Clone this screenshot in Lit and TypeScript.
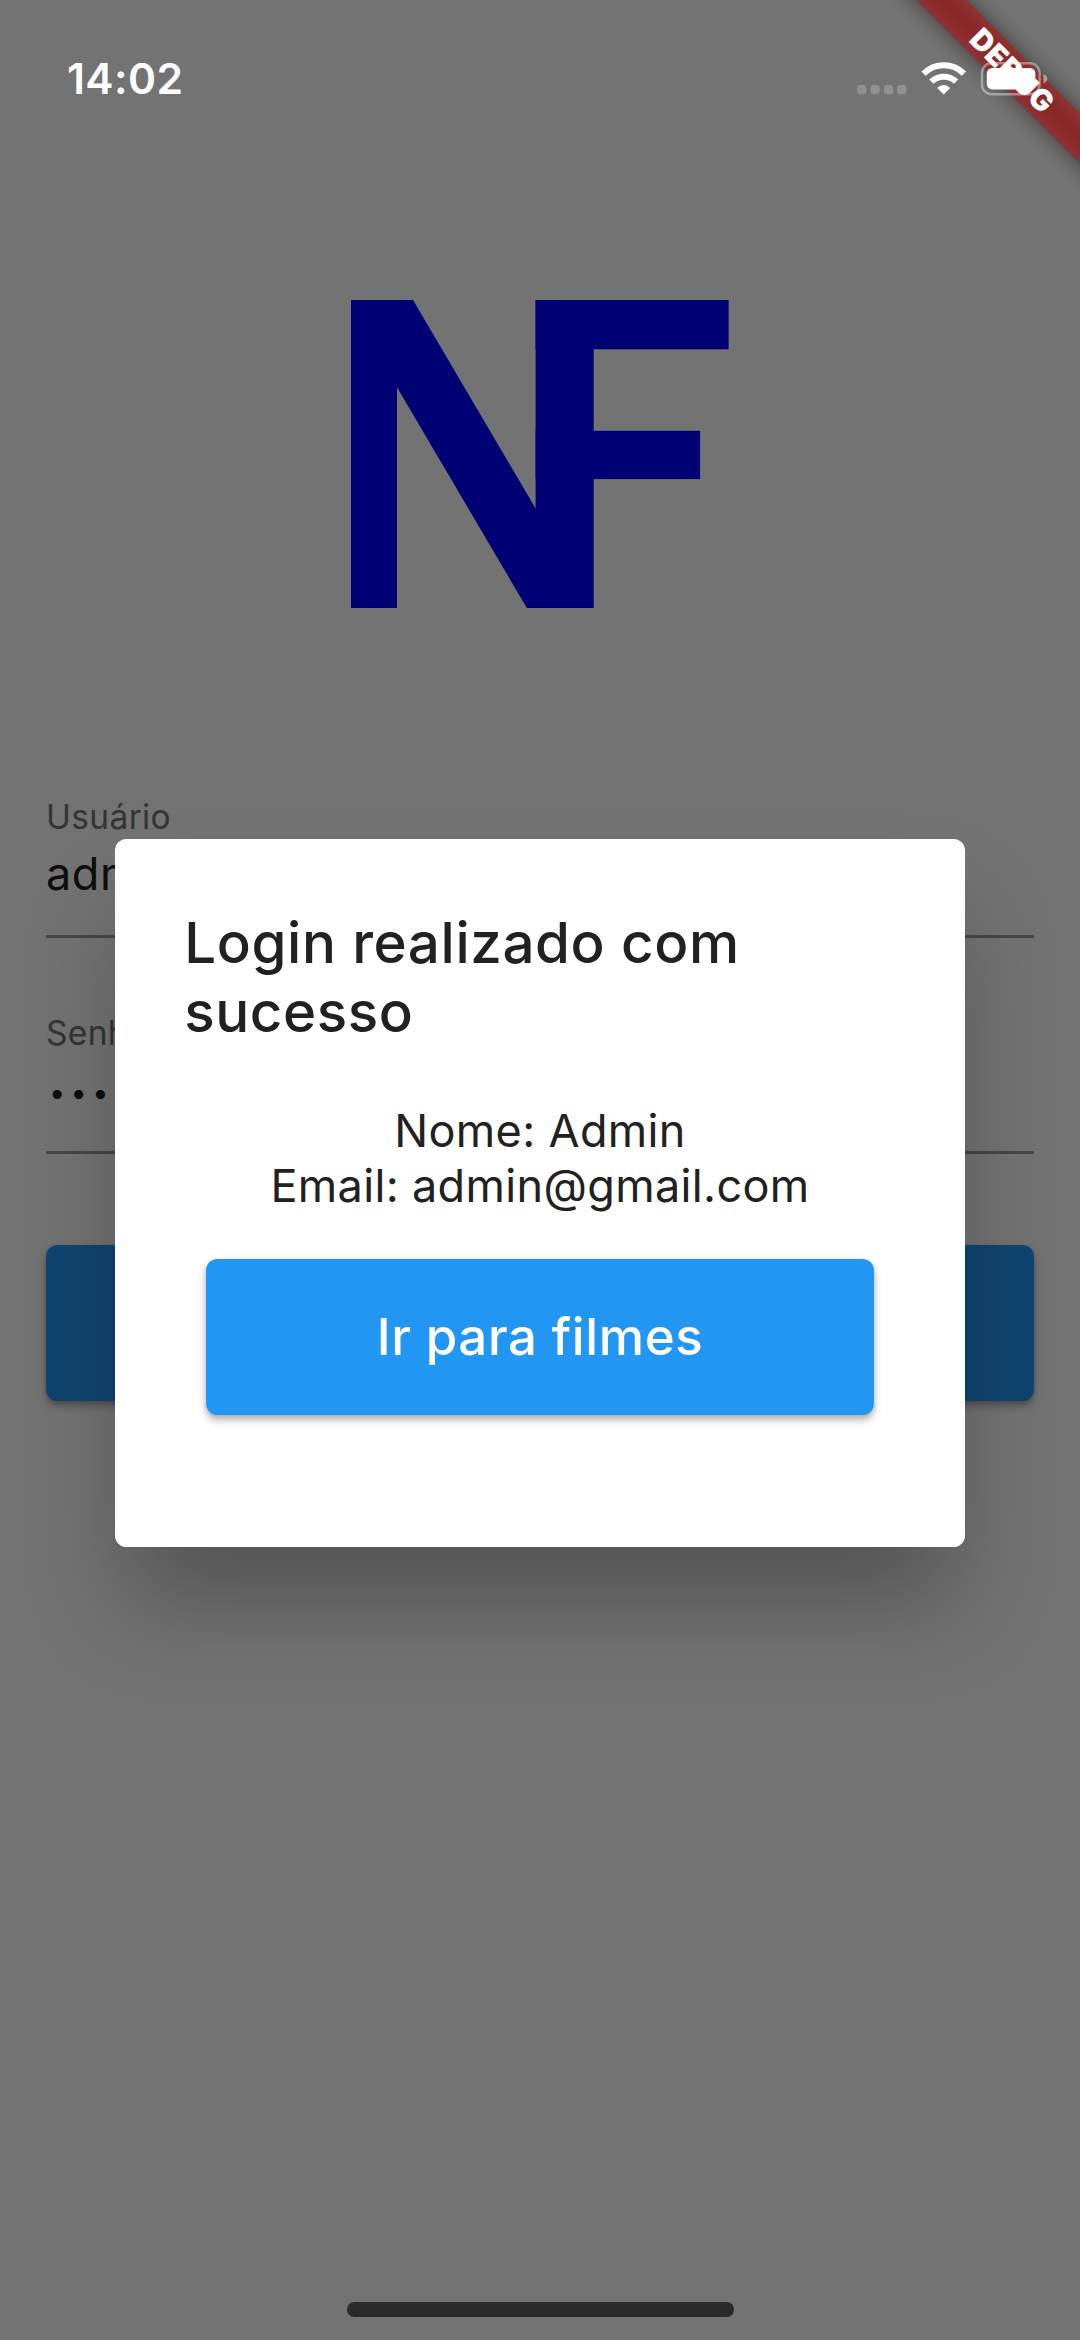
import { LitElement, html, css } from "lit";
import { customElement, property } from "lit/decorators.js";

@customElement("status-bar")
class StatusBar extends LitElement {
  static styles = css`
    :host {
      display: flex;
      justify-content: space-between;
      align-items: flex-start;
      box-sizing: border-box;
      padding: 53px 30px 0 67px;
      height: 160px;
      color: #fff;
    }
    .time {
      font-size: 42.5px;
      line-height: 52px;
      font-weight: 600;
      letter-spacing: 0.4px;
    }
    .icons {
      display: block;
      width: 193px;
      height: 36px;
      margin-top: 8px;
    }
  `;
  render() {
    return html`
      <span class="time">14:02</span>
      <svg class="icons" viewBox="857 61 193 36">
        <g fill="#fff" fill-opacity="0.22">
          <rect x="857" y="85" width="9.2" height="9.2" rx="3" />
          <rect x="870.5" y="85" width="9.2" height="9.2" rx="3" />
          <rect x="884" y="85" width="9.2" height="9.2" rx="3" />
          <rect x="897.2" y="85" width="9.2" height="9.2" rx="3" />
        </g>
        <g fill="none" stroke="#fff">
          <path d="M923.6 73.7A28.5 28.5 0 0 1 963.9 73.7" stroke-width="6" />
          <path d="M931.4 81.7A17.6 17.6 0 0 1 956.1 81.7" stroke-width="6" />
        </g>
        <path d="M943.7 94.4L937.7 88.4Q937.3 87.8 938 87.3Q943.7 82.7 949.4 87.3Q950.1 87.8 949.7 88.4Z" fill="#fff" />
        <rect x="982" y="63.2" width="57.6" height="31" rx="9.5" fill="none" stroke="#fff" stroke-opacity="0.4" stroke-width="2.4" />
        <path d="M1043.4 74Q1047.4 75.8 1047.4 78.8T1043.4 83.6Z" fill="#fff" fill-opacity="0.45" />
        <rect x="986.8" y="68" width="48.6" height="21.4" rx="5.5" fill="#fff" />
      </svg>
    `;
  }
}

@customElement("form-field")
class FormField extends LitElement {
  @property() label = "";
  @property() value = "";
  @property({ type: Boolean }) secret = false;

  static styles = css`
    :host {
      display: flex;
      flex-direction: column;
      box-sizing: border-box;
      height: 141px;
      border-bottom: 3px solid #9b9b9b;
    }
    .label {
      font-size: 33.5px;
      line-height: 40px;
      color: #737373;
      letter-spacing: 0.35px;
    }
    .value {
      margin-top: 9px;
      font-size: 45px;
      line-height: 56px;
      color: #212121;
      letter-spacing: 0.6px;
    }
    .secret {
      margin-top: 11.5px;
      padding-left: 3px;
      font-size: 29px;
      letter-spacing: 5.3px;
    }
  `;
  render() {
    return html`
      <span class="label">${this.label}</span>
      <span class="value ${this.secret ? "secret" : ""}">${this.secret ? "•".repeat(this.value.length) : this.value}</span>
    `;
  }
}

@customElement("brand-logo")
class BrandLogo extends LitElement {
  static styles = css`
    :host {
      display: block;
    }
    .mark {
      display: block;
      width: 378px;
      height: 308px;
    }
  `;
  render() {
    return html`
      <svg class="mark" viewBox="0 0 378 308" fill="#0000ff">
        <rect x="0" y="0" width="46" height="308" />
        <rect x="-5.3" y="0" width="67.3" height="308" transform="skewX(30.46)" />
        <rect x="184.6" y="0" width="58.1" height="308" />
        <rect x="184.6" y="0" width="193" height="49.3" />
        <rect x="184.6" y="130.8" width="164.5" height="48.3" />
      </svg>
    `;
  }
}

@customElement("app-root")
class AppRoot extends LitElement {
  static styles = css`
    :host {
      display: block;
      position: relative;
      width: 1080px;
      height: 2340px;
      overflow: hidden;
      background: #fafafa;
      font-family: Inter, Roboto, "Liberation Sans", sans-serif;
    }
    .page {
      display: flex;
      flex-direction: column;
      box-sizing: border-box;
      height: 100%;
      padding: 300px 46px 0;
    }
    .logo {
      align-self: center;
    }
    .fields {
      display: flex;
      flex-direction: column;
      gap: 75px;
      margin-top: 189px;
    }
    .button {
      display: flex;
      align-items: center;
      justify-content: center;
      box-sizing: border-box;
      height: 155.5px;
      border-radius: 11.5px;
      background: #2196f3;
      color: #fff;
      font-size: 51px;
      line-height: 62px;
      font-weight: 500;
      letter-spacing: 0.6px;
      box-shadow: 0 5px 8px rgba(0, 0, 0, 0.28), 0 2px 4px rgba(0, 0, 0, 0.1);
    }
    .enter {
      margin-top: 91px;
    }
    .scrim {
      position: absolute;
      inset: 0;
      background: rgba(0, 0, 0, 0.54);
    }
    .dialog {
      position: absolute;
      left: 115.2px;
      top: 838.6px;
      width: 849.6px;
      height: 708.8px;
      box-sizing: border-box;
      padding: 69px 69px 0;
      border-radius: 11.5px;
      background: #fff;
      color: #212121;
      box-shadow: 0 65px 96px -10px rgba(0, 0, 0, 0.27);
    }
    .title {
      margin: 0;
      font-size: 56.5px;
      line-height: 69px;
      font-weight: 500;
      letter-spacing: 0.6px;
    }
    .details {
      margin: 57.5px 0 0;
      font-size: 45px;
      line-height: 55px;
      text-align: center;
      letter-spacing: 0.35px;
    }
    .go {
      margin: 46px 21.6px 0;
    }
    .banner {
      position: absolute;
      right: 0;
      top: 0;
      width: 260px;
      height: 260px;
      overflow: hidden;
    }
    .shade,
    .ribbon {
      position: absolute;
      box-sizing: border-box;
      left: 40.8px;
      top: 51.9px;
      width: 300px;
      height: 34.6px;
      transform: rotate(45deg);
    }
    .shade {
      background: rgba(0, 0, 0, 0.5);
      filter: blur(10px);
    }
    .ribbon {
      padding-left: 4px;
      background: rgba(183, 28, 28, 0.627);
      color: #fff;
      font-size: 29.5px;
      line-height: 34.6px;
      font-weight: 900;
      text-align: center;
      letter-spacing: 0.5px;
    }
    .status {
      position: absolute;
      left: 0;
      top: 0;
      width: 100%;
    }
    .home {
      position: absolute;
      left: 347.3px;
      top: 2302.4px;
      width: 386.4px;
      height: 14.4px;
      border-radius: 7.2px;
      background: #2a2a2a;
    }
  `;
  render() {
    return html`
      <main class="page">
        <brand-logo class="logo"></brand-logo>
        <section class="fields">
          <form-field label="Usuário" value="admin"></form-field>
          <form-field label="Senha" value="admin" secret></form-field>
        </section>
        <div class="button enter"></div>
      </main>
      <div class="scrim"></div>
      <section class="dialog" role="dialog">
        <h1 class="title">Login realizado com sucesso</h1>
        <p class="details">Nome: Admin<br />Email: admin@gmail.com</p>
        <div class="button go" role="button">Ir para filmes</div>
      </section>
      <div class="banner">
        <div class="shade"></div>
        <div class="ribbon">DEBUG</div>
      </div>
      <status-bar class="status"></status-bar>
      <div class="home"></div>
    `;
  }
}
